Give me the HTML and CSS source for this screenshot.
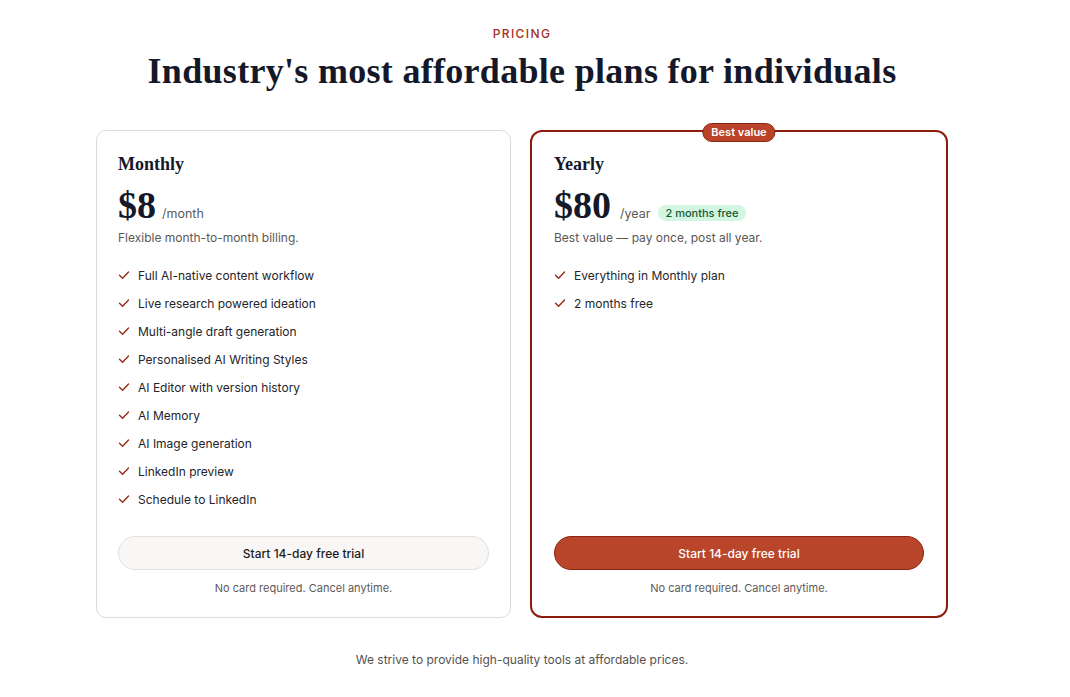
FILE: index.html
```html
<!DOCTYPE html>
<html lang="en">
<head>
<meta charset="utf-8">
<title>Pricing</title>
<link rel="stylesheet" href="styles.css">
</head>
<body>
<main class="pricing">
  <header class="pricing-head">
    <p class="eyebrow">PRICING</p>
    <h1 class="title">Industry's most affordable plans for individuals</h1>
  </header>

  <section class="plans">
    <article class="plan">
      <h2 class="plan-name">Monthly</h2>
      <div class="price-row">
        <span class="price">$8</span>
        <span class="period">/month</span>
      </div>
      <p class="plan-desc">Flexible month-to-month billing.</p>
      <ul class="features">
        <li><svg class="check" viewBox="0 0 12 12"><path d="M1.5 6.2 4.6 9.2 10.5 3"/></svg>Full AI-native content workflow</li>
        <li><svg class="check" viewBox="0 0 12 12"><path d="M1.5 6.2 4.6 9.2 10.5 3"/></svg>Live research powered ideation</li>
        <li><svg class="check" viewBox="0 0 12 12"><path d="M1.5 6.2 4.6 9.2 10.5 3"/></svg>Multi-angle draft generation</li>
        <li><svg class="check" viewBox="0 0 12 12"><path d="M1.5 6.2 4.6 9.2 10.5 3"/></svg>Personalised AI Writing Styles</li>
        <li><svg class="check" viewBox="0 0 12 12"><path d="M1.5 6.2 4.6 9.2 10.5 3"/></svg>AI Editor with version history</li>
        <li><svg class="check" viewBox="0 0 12 12"><path d="M1.5 6.2 4.6 9.2 10.5 3"/></svg>AI Memory</li>
        <li><svg class="check" viewBox="0 0 12 12"><path d="M1.5 6.2 4.6 9.2 10.5 3"/></svg>AI Image generation</li>
        <li><svg class="check" viewBox="0 0 12 12"><path d="M1.5 6.2 4.6 9.2 10.5 3"/></svg>LinkedIn preview</li>
        <li><svg class="check" viewBox="0 0 12 12"><path d="M1.5 6.2 4.6 9.2 10.5 3"/></svg>Schedule to LinkedIn</li>
      </ul>
      <div class="plan-foot">
        <button class="cta">Start 14-day free trial</button>
        <p class="note">No card required. Cancel anytime.</p>
      </div>
    </article>

    <article class="plan plan-featured">
      <span class="badge">Best value</span>
      <h2 class="plan-name">Yearly</h2>
      <div class="price-row">
        <span class="price">$80</span>
        <span class="period period-wide">/year</span>
        <span class="saving">2 months free</span>
      </div>
      <p class="plan-desc">Best value — pay once, post all year.</p>
      <ul class="features">
        <li><svg class="check" viewBox="0 0 12 12"><path d="M1.5 6.2 4.6 9.2 10.5 3"/></svg>Everything in Monthly plan</li>
        <li><svg class="check" viewBox="0 0 12 12"><path d="M1.5 6.2 4.6 9.2 10.5 3"/></svg>2 months free</li>
      </ul>
      <div class="plan-foot">
        <button class="cta cta-primary">Start 14-day free trial</button>
        <p class="note">No card required. Cancel anytime.</p>
      </div>
    </article>
  </section>

  <p class="closing">We strive to provide high-quality tools at affordable prices.</p>
</main>
</body>
</html>
```

FILE: styles.css
```css
* {
  box-sizing: border-box;
}

body {
  margin: 0;
  background: #ffffff;
  color: #141726;
  font-family: Inter, "Noto Sans", sans-serif;
}

.pricing {
  width: 852px;
  margin-left: 96px;
  padding-top: 27px;
}

.pricing-head {
  text-align: center;
}

.eyebrow {
  margin: 0;
  font-size: 12px;
  line-height: 14px;
  letter-spacing: 1.4px;
  color: #a3301c;
  font-weight: 500;
}

.title {
  margin: 10px 0 0;
  font-family: "Liberation Serif", "DejaVu Serif", serif;
  font-weight: 700;
  font-size: 36px;
  line-height: 40px;
  color: #141829;
  letter-spacing: 0.3px;
}

.plans {
  display: grid;
  grid-template-columns: 415px 418px;
  gap: 19px;
  margin-top: 39px;
}

.plan {
  position: relative;
  display: flex;
  flex-direction: column;
  height: 488px;
  padding: 22px 21px 22px 21px;
  border: 1px solid #dddbd9;
  border-radius: 10px;
  background: #fff;
}

.plan-featured {
  border: 2px solid #8c1d0c;
  border-radius: 12px;
  padding: 21px 22px 21px 22px;
}

.badge {
  position: absolute;
  top: -9px;
  left: 50%;
  transform: translateX(-50%);
  height: 19px;
  padding: 0 8px;
  border: 1px solid #8c2612;
  border-radius: 10px;
  background: #b9442a;
  color: #fff;
  font-size: 11px;
  font-weight: 600;
  line-height: 17px;
  white-space: nowrap;
}

.plan-name {
  margin: 0;
  font-family: "Liberation Serif", "DejaVu Serif", serif;
  font-weight: 700;
  font-size: 18px;
  line-height: 22px;
  color: #141829;
}

.price-row {
  display: flex;
  align-items: baseline;
  margin-top: 10px;
  height: 40px;
}

.price {
  font-family: "Liberation Serif", "DejaVu Serif", serif;
  font-weight: 700;
  font-size: 38px;
  line-height: 40px;
  color: #141829;
}

.period {
  margin-left: 6px;
  font-size: 12.5px;
  color: #5d5a58;
}

.period-wide {
  margin-left: 9px;
}

.saving {
  margin-left: 8px;
  padding: 1px 7px;
  border-radius: 9px;
  background: #d3f6e2;
  color: #155a34;
  font-size: 11px;
  font-weight: 500;
  line-height: 14px;
  position: relative;
  top: -1px;
}

.plan-desc {
  margin: 5px 0 0;
  font-size: 12px;
  line-height: 16px;
  color: #5a5755;
}

.features {
  list-style: none;
  margin: 15px 0 0;
  padding: 0;
}

.features li {
  display: flex;
  align-items: center;
  gap: 8px;
  height: 28px;
  font-size: 12px;
  color: #25242a;
}

.check {
  width: 12px;
  height: 12px;
  flex: none;
  fill: none;
  stroke: #952a19;
  stroke-width: 1.4;
  stroke-linecap: round;
  stroke-linejoin: round;
}

.plan-foot {
  margin-top: auto;
}

.cta {
  display: block;
  width: 100%;
  height: 34px;
  border: 1px solid #e3e0dd;
  border-radius: 17px;
  background: #f9f7f5;
  color: #1c1b22;
  font-family: Inter, "Noto Sans", sans-serif;
  font-size: 12px;
  font-weight: 500;
  cursor: pointer;
}

.cta-primary {
  border-color: #8c2612;
  background: #b9452a;
  color: #fff;
}

.note {
  margin: 11px 0 0;
  text-align: center;
  font-size: 11px;
  line-height: 14px;
  color: #5d5a58;
}

.closing {
  margin: 34px 0 0;
  text-align: center;
  font-size: 12px;
  color: #55524f;
}
```
